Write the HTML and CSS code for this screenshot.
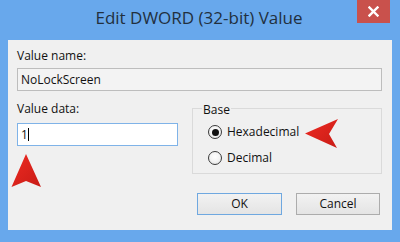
FILE: index.html
```html
<!DOCTYPE html>
<html>
<head>
<meta charset="utf-8">
<link rel="stylesheet" href="styles.css">
</head>
<body>
<div class="window">
  <div class="titlebar">
    <div class="title">Edit DWORD (32-bit) Value</div>
    <div class="close"><svg width="11" height="11" viewBox="0 0 11 11"><path d="M1.5 1.5 L9.5 9.5 M9.5 1.5 L1.5 9.5" stroke="#fff" stroke-width="2.4" stroke-linecap="square"/></svg></div>
  </div>
  <div class="client">
    <div class="label">Value name:</div>
    <div class="field name">NoLockScreen</div>
    <div class="row">
      <div class="col-data">
        <div class="label">Value data:</div>
        <div class="field data"><span>1</span><span class="caret"></span></div>
      </div>
      <div class="group">
        <span class="legend">Base</span>
        <div class="radio"><span class="dot checked"></span>Hexadecimal</div>
        <div class="radio second"><span class="dot"></span>Decimal</div>
      </div>
    </div>
    <div class="buttons">
      <div class="btn default">OK</div>
      <div class="btn cancel">Cancel</div>
    </div>
  </div>
</div>
<svg class="annot" width="400" height="242" viewBox="0 0 400 242">
  <defs>
    <linearGradient id="ga" x1="0" y1="0" x2="1" y2="1">
      <stop offset="0" stop-color="#ee2a22"/>
      <stop offset="1" stop-color="#c81c16"/>
    </linearGradient>
  </defs>
  <polygon points="26,154 41,187 26,181 11.5,187" fill="url(#ga)"/>
  <polygon points="305,133.5 338,119 329,134 337,148" fill="url(#ga)"/>
</svg>
</body>
</html>
```

FILE: styles.css
```css
html, body {
  margin: 0;
  padding: 0;
}
body {
  width: 400px;
  height: 242px;
  background: #68a8ec;
  font-family: "Open Sans", "Noto Sans", sans-serif;
  position: relative;
  overflow: hidden;
}
.window {
  display: flex;
  flex-direction: column;
}
.titlebar {
  height: 40px;
  display: flex;
  justify-content: center;
  position: relative;
}
.title {
  font-size: 17px;
  line-height: 36px;
  color: #22303e;
  padding-right: 2px;
}
.close {
  position: absolute;
  right: 10px;
  top: 0;
  width: 33px;
  height: 23px;
  background: #c9514c;
  display: flex;
  align-items: center;
  justify-content: center;
}
.close svg {
  display: block;
}
.client {
  margin: 0 8px;
  height: 190px;
  box-sizing: border-box;
  background: #f0f0f0;
  padding: 8px 10px 0 9px;
  font-size: 12px;
  color: #111;
}
.label {
  line-height: 16px;
  height: 16px;
}
.field {
  height: 23px;
  box-sizing: border-box;
  line-height: 21px;
  padding-left: 3px;
  display: flex;
  align-items: center;
}
.name {
  margin-top: 4px;
  background: #f3f3f3;
  border: 1px solid #bdbdbd;
}
.row {
  display: flex;
  gap: 14px;
}
.col-data {
  width: 161px;
  display: flex;
  flex-direction: column;
}
.col-data .label {
  margin-top: 10px;
}
.data {
  margin-top: 6px;
  background: #fff;
  border: 1px solid #7fb3e8;
}
.caret {
  display: inline-block;
  width: 1px;
  height: 13px;
  background: #000;
  margin-left: 0;
}
.group {
  flex: 1;
  margin-top: 17px;
  height: 66px;
  box-sizing: border-box;
  border: 1px solid #dadada;
  display: flex;
  flex-direction: column;
  padding-left: 15px;
}
.legend {
  align-self: flex-start;
  margin: -7px 0 0 -6px;
  padding: 0 1px;
  background: #f0f0f0;
  line-height: 16px;
}
.radio {
  display: flex;
  align-items: center;
  gap: 5px;
  height: 16px;
  line-height: 16px;
  margin-top: 6px;
}
.radio.second {
  margin-top: 10px;
}
.dot {
  width: 14px;
  height: 14px;
  box-sizing: border-box;
  border: 1px solid #3a3a3a;
  border-radius: 50%;
  background: radial-gradient(circle at 50% 40%, #ffffff 0%, #f4f4f4 50%, #dcdcdc 100%);
  display: flex;
  align-items: center;
  justify-content: center;
}
.dot.checked::after {
  content: "";
  width: 7px;
  height: 7px;
  border-radius: 50%;
  background: #111;
}
.buttons {
  margin-top: 19px;
  display: flex;
  justify-content: flex-end;
  gap: 14px;
  padding-right: 2px;
}
.btn {
  height: 22px;
  box-sizing: border-box;
  border: 1px solid #acacac;
  background: linear-gradient(#f2f2f2, #e4e4e4);
  text-align: center;
  line-height: 20px;
  color: #111;
}
.btn.default {
  width: 85px;
  border-color: #6fa8e0;
}
.btn.cancel {
  width: 84px;
}
.annot {
  position: absolute;
  left: 0;
  top: 0;
  pointer-events: none;
}
```
